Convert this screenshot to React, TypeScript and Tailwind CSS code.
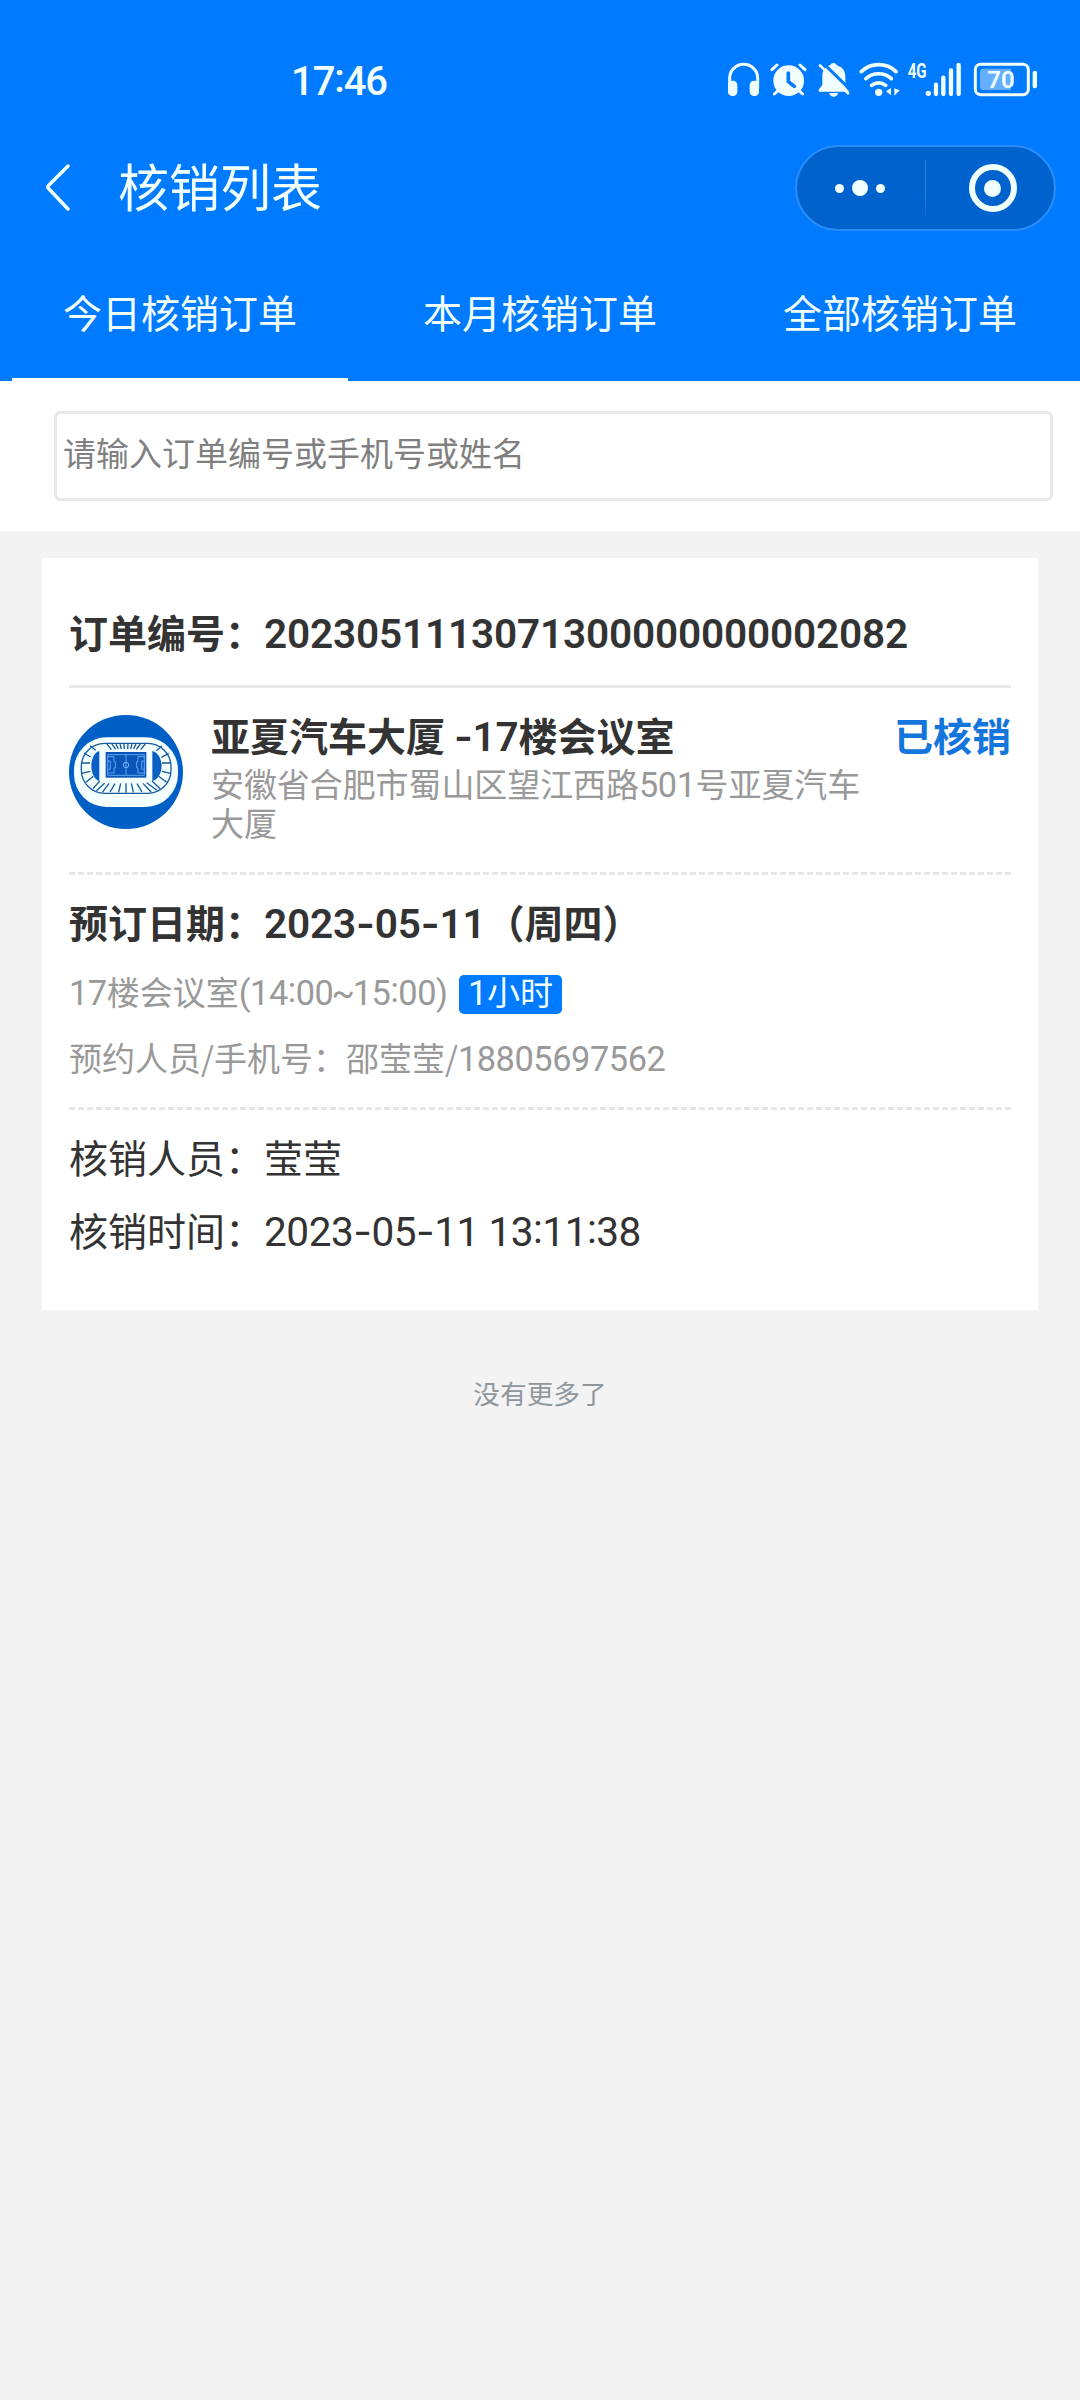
import { Fragment, ReactNode } from 'react';

type Order = {
    orderNo: string;
    venue: string;
    address: string;
    status: string;
    date: string;
    weekday: string;
    room: string;
    slot: string;
    duration: string;
    contact: string;
    phone: string;
    verifier: string;
    verifiedAt: string;
};

const tabs = ['今日核销订单', '本月核销订单', '全部核销订单'];

const order: Order = {
    orderNo: '2023051113071300000000002082',
    venue: '亚夏汽车大厦',
    address: '安徽省合肥市蜀山区望江西路',
    status: '已核销',
    date: '2023-05-11',
    weekday: '周四',
    room: '楼会议室',
    slot: '14:00~15:00',
    duration: '小时',
    contact: '邵莹莹',
    phone: '18805697562',
    verifier: '莹莹',
    verifiedAt: '2023-05-11 13:11:38',
};

// Latin digits run slightly taller than the Chinese text around them,
// with a wide hyphen and a vertically centred colon
const Num = ({ children, bold }: { children: string; bold?: boolean }) => (
    <span className={`font-['Roboto',sans-serif] text-[1.04em] leading-none ${bold ? 'font-semibold tracking-[-0.004em]' : 'tracking-[-0.012em]'}`}>
        {children.split(/([-:~])/).map((part, i) => {
            if (part === '-') return <span key={i} className="font-['Inter',sans-serif]">-</span>;
            if (part === ':') return <span key={i} className="relative -top-[0.08em]">:</span>;
            if (part === '~') return <span key={i} className="-mx-[0.055em]">~</span>;
            return <Fragment key={i}>{part}</Fragment>;
        })}
    </span>
);

const HeadphoneIcon = () => (
    <svg className="h-10 w-[33px]" viewBox="81 60 99 120" fill="none">
        <path d="M89 146V114a42 41 0 0 1 84 0v32" stroke="currentColor" strokeWidth="9" />
        <rect x="84" y="122" width="28" height="46" rx="13" fill="currentColor" />
        <rect x="149" y="122" width="28" height="46" rx="13" fill="currentColor" />
    </svg>
);

const AlarmIcon = () => (
    <svg className="h-10 w-[37px]" viewBox="210 60 111 120" fill="none" strokeLinecap="round">
        <circle cx="266" cy="122" r="46" fill="currentColor" />
        <path d="M216 89l15-14M315 89l-15-14M232 154l-9 8M299 154l9 8" stroke="currentColor" strokeWidth="9" />
        <path d="M265 99v26l18 14" stroke="#007aff" strokeWidth="11" strokeLinejoin="round" />
    </svg>
);

const BellOffIcon = () => (
    <svg className="h-10 w-[33px]" viewBox="351 60 99 120" fill="none" strokeLinecap="round">
        <path
            d="M389 76c4-1 4-7 11-7s9 6 13 8c16 5 23 16 23 32v32l12 14H359c-4 0-4-4-2-7l10-13v-27c0-16 8-27 22-32z"
            fill="currentColor"
        />
        <path d="M388 159h26c-2 15-24 15-26 0z" fill="currentColor" />
        <path d="M367 67l88 86" stroke="#007aff" strokeWidth="9" />
        <path d="M360 76l84 84" stroke="currentColor" strokeWidth="8" />
    </svg>
);

const WifiIcon = () => (
    <svg className="h-10 w-[41px]" viewBox="477 60 123 120" fill="none" strokeLinecap="round">
        <path d="M484 95a75 75 0 0 1 104 0M498 116a56 56 0 0 1 76 0M515 136a33 33 0 0 1 42 0" stroke="currentColor" strokeWidth="11" />
        <circle cx="536" cy="157" r="11" fill="currentColor" />
        <path d="M573 144v22l-15-12zM583 145l16 6-16 16z" fill="currentColor" />
    </svg>
);

const SignalIcon = () => (
    <svg className="h-10 w-[55px] overflow-visible" viewBox="621 60 165 120" fill="none" strokeLinecap="round">
        <text x="623" y="113" fill="currentColor" fontFamily="Roboto, sans-serif" fontSize="60" fontWeight="700" textLength="57" lengthAdjust="spacingAndGlyphs">
            4G
        </text>
        <circle cx="685" cy="160" r="8" fill="currentColor" />
        <path d="M708 134v28M730 113v49M753 91v71M776 75v87" stroke="currentColor" strokeWidth="13" />
    </svg>
);

const BatteryIcon = () => (
    <svg className="h-10 w-[65px]" viewBox="819 60 195 120" fill="none">
        <rect x="826" y="73" width="159" height="91" rx="16" stroke="currentColor" strokeWidth="9" />
        <path d="M850 86h82v64h-82a10 10 0 0 1-10-10V96a10 10 0 0 1 10-10z" fill="#66afff" />
        <rect x="998" y="92" width="13" height="53" rx="6" fill="currentColor" />
        <text x="903" y="144" textAnchor="middle" fill="currentColor" fontFamily="Roboto, sans-serif" fontSize="72" fontWeight="600">
            70
        </text>
    </svg>
);

const VenueLogo = () => (
    <svg className="size-[114px] shrink-0" viewBox="27 44 342 342" fill="none">
        <circle cx="198" cy="215" r="171" fill="#005fc5" />
        <rect x="42" y="111" width="312" height="209" rx="98" fill="#f4ffff" />
        <rect x="64" y="129" width="269" height="150" rx="70" stroke="#175a9f" strokeWidth="4" />
        <path d="M118 152v90c-32-10-32-80 0-90zM277 152v90c37-10 37-80 0-90z" fill="#0a5fc4" />
        <path
            d="M140 130l14 18M155 130l12 17M168 131l7 15M180 131l4 15M192 131l1 15M204 131l-1 15M216 131l-4 15M228 131l-7 15M241 131l-12 16M256 131l-14 17M198 249v28M182 249l-6 27M214 249l6 27M165 250l-15 25M231 250l15 25M147 249l-20 27M249 249l24 26M134 249l-25 22M260 247l31 23M90 136l17 14M306 137l-17 14M72 158l20 12M326 159l-22 12M65 188h25M306 188h27M65 219l26-6M306 213l26 6M78 246l22-18M296 228l24 18M99 265l20-23M276 242l24 23"
            stroke="#175a9f"
            strokeWidth="4"
        />
        <rect x="137" y="155" width="122" height="77" fill="#0b55b8" />
        <path
            d="M143 163h110v62H143zM198 163v62M143 169h19v15h4M143 218h19v-15h4M253 169h-19v15h-4M253 218h-19v-15h-4M166 184v19M230 184v19M143 182h8v25h-8M253 182h-8v25h8"
            stroke="#6bb4ff"
            strokeWidth="2.5"
        />
        <circle cx="198" cy="194" r="8" stroke="#8cc6ff" strokeWidth="2.5" />
    </svg>
);

const StatusBar = () => (
    <div className="flex h-[124px] items-start pt-[60px] pr-[42px] pl-[291px] text-[#f2ffff]">
        <span className="mt-0.5 font-['Roboto',sans-serif] text-[40px] leading-10 font-medium tracking-[-1.1px]">
            17<span className="relative -top-[3px]">:</span>46
        </span>
        <div className="ml-auto flex items-center">
            <HeadphoneIcon />
            <span className="ml-2.5"><AlarmIcon /></span>
            <span className="ml-2.5"><BellOffIcon /></span>
            <span className="ml-[9px]"><WifiIcon /></span>
            <span className="ml-[7px]"><SignalIcon /></span>
            <span className="ml-[11px]"><BatteryIcon /></span>
        </div>
    </div>
);

const NavBar = () => (
    <div className="flex h-[128px] items-center pr-6 pl-[44px] text-[#f2ffff]">
        <svg className="mb-0.5 h-12 w-7" viewBox="0 0 28 48" fill="none" stroke="currentColor" strokeWidth="3.5" strokeLinecap="round" strokeLinejoin="round">
            <path d="M24 3L4.500 22.500a2 2 0 0 0 0 3L24 46" />
        </svg>
        <h1 className="mb-[6px] ml-[46px] text-[51px] leading-[60px]">核销列表</h1>
        <div className="ml-auto flex h-[86px] w-[261px] items-center rounded-full border-2 border-[#2b8dfb] bg-[#0062cc]">
            <div className="flex w-[128px] items-center justify-center gap-2 pr-[3px]">
                <i className="size-[9px] rounded-full bg-current" />
                <i className="size-4 rounded-full bg-current" />
                <i className="size-[9px] rounded-full bg-current" />
            </div>
            <i className="h-14 w-px bg-linear-to-b from-[#2b83dc] via-[#2b83dc] to-[#0f6cd2]" />
            <div className="flex flex-1 justify-center pl-[5px]">
                <div className="flex size-12 items-center justify-center rounded-full border-[6px] border-current">
                    <i className="size-[17px] rounded-full bg-current" />
                </div>
            </div>
        </div>
    </div>
);

const Tabs = () => (
    <div className="grid h-[129px] grid-cols-3 text-[39px] text-[#f2ffff]">
        {tabs.map((tab, i) => (
            <div key={tab} className="flex flex-col items-center px-3">
                <span className="mt-[29px] h-[97px] leading-[60px]">{tab}</span>
                {i === 0 && <i className="h-[3px] w-full bg-white" />}
            </div>
        ))}
    </div>
);

const Field = ({ label, children }: { label: string; children: ReactNode }) => (
    <p className="whitespace-nowrap">
        {label}：{children}
    </p>
);

const OrderCard = ({ data }: { data: Order }) => (
    <section className="mx-[42px] mt-[27px] h-[752px] bg-white px-[27px] text-[39px] text-[#333]">
        <div className="h-[130px] border-b-[3px] border-[#e9e9e9] pt-[43px] leading-[60px] font-bold">
            <Field label="订单编号"><Num bold>{data.orderNo}</Num></Field>
        </div>
        <div className="flex h-[187px] items-start border-b-[3px] border-dashed border-[#e6e6e8] pt-[27px]">
            <VenueLogo />
            <div className="-mt-[5px] ml-7 w-[660px]">
                <h2 className="h-[54px] leading-[48px] font-bold">
                    {data.venue} <Num bold>-17</Num>{data.room}
                </h2>
                <p className="text-[33px] leading-[39px] tracking-[-0.08px] text-[#999]">
                    {data.address}<Num>501</Num>号{data.venue}
                </p>
            </div>
            <span className="-mt-[5px] ml-auto leading-[48px] font-bold text-[#1475dd]">{data.status}</span>
        </div>
        <div className="h-[235px] border-b-[3px] border-dashed border-[#e6e6e8] pt-[16px]">
            <div className="leading-[60px] font-bold">
                <Field label="预订日期"><Num bold>{data.date}</Num>（{data.weekday}）</Field>
            </div>
            <div className="mt-[24px] flex h-[39px] items-center text-[33px] leading-[39px] text-[#999]">
                <span className="-mt-[6px]"><Num>17</Num>{data.room}<Num>{`(${data.slot})`}</Num></span>
                <span className="ml-[11px] h-[39px] rounded-[5px] bg-[#007aff] px-[9.5px] leading-[33px] text-[#f2ffff]">
                    <Num>1</Num>{data.duration}
                </span>
            </div>
            <div className="mt-[24px] text-[33px] leading-[39px] text-[#999]">
                <Field label="预约人员/手机号">{data.contact}/<Num>{data.phone}</Num></Field>
            </div>
        </div>
        <div className="space-y-[13px] pt-[16px] leading-[60px]">
            <Field label="核销人员">{data.verifier}</Field>
            <Field label="核销时间"><Num>{data.verifiedAt}</Num></Field>
        </div>
    </section>
);

export default function App() {
    return (
        <div lang="zh-CN" className="h-[2400px] w-[1080px] overflow-hidden bg-[#f3f3f4] font-['Noto_Sans_CJK_SC',sans-serif]">
            <header className="bg-[#007aff]">
                <StatusBar />
                <NavBar />
                <Tabs />
            </header>
            <div className="h-[150px] bg-white pt-[30px] pr-[27px] pl-[54px]">
                <input
                    className="block h-[90px] w-full rounded-[6px] border-[3px] border-[#e8e8e8] px-[6px] pb-[9px] text-[33px] placeholder:text-[#808080] placeholder:opacity-100"
                    placeholder="请输入订单编号或手机号或姓名"
                />
            </div>
            <OrderCard data={order} />
            <p className="mt-[63px] text-center text-[26.7px] leading-[40px] text-[#8f979c]">没有更多了</p>
        </div>
    );
}
